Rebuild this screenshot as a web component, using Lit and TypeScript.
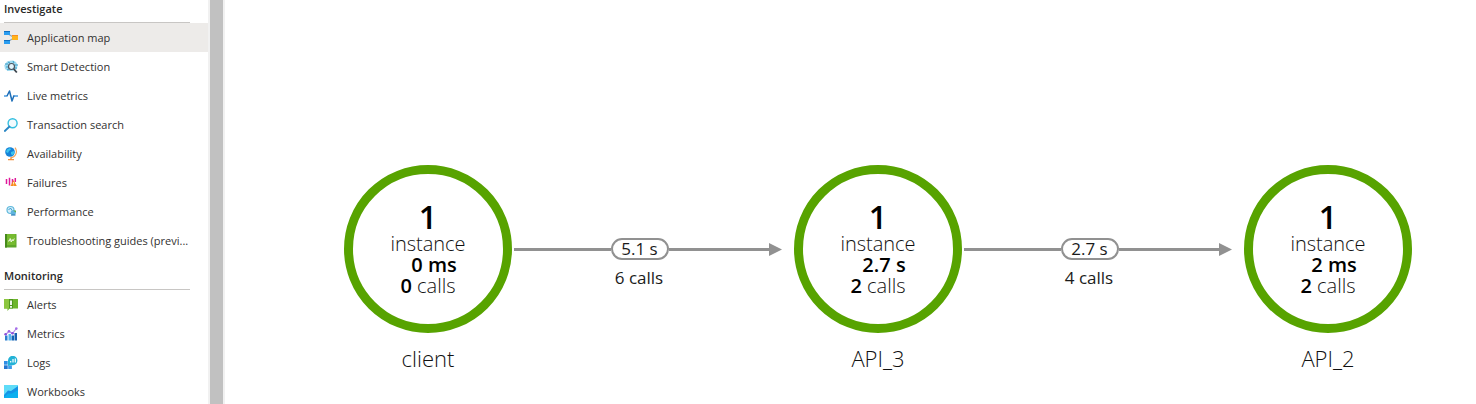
import { LitElement, html, css, svg, TemplateResult } from "lit";
import { customElement, property } from "lit/decorators.js";

interface MenuItem {
  label: string;
  icon: TemplateResult;
}

interface MenuSection {
  title: string;
  items: MenuItem[];
}

const icons = {
  map: svg`
    <path d="M5 3.500 9 6M5 10 9 7.500" stroke="#8fa9b8" stroke-width="1.200" fill="none"/>
    <rect x="0" y="0" width="6" height="4" fill="#2a9df0"/>
    <rect x="0" y="0" width="6" height="1" fill="#0f6fc0"/>
    <rect x="0" y="9" width="6" height="4" fill="#2a9df0"/>
    <rect x="0" y="9" width="6" height="1" fill="#0f6fc0"/>
    <rect x="8" y="4" width="6" height="5" fill="#ffb31a"/>
    <rect x="8" y="4" width="6" height="1" fill="#f78d1e"/>`,
  detection: svg`
    <path d="M3 1.500 6 .8 9 .5 12 2l1.500 3-.5 4-3 1.500-6 .5L1 9 .3 5.500z" fill="#9fdaf0"/>
    <path d="M1 4h3M2 7h2M4 2l2 1M9 1l1 2M11 5h3M11 8h2M3 10l2-1" stroke="#3c9fc9" stroke-width="1"/>
    <circle cx="7.500" cy="6.500" r="3" fill="#e4f5fc" stroke="#4a5560" stroke-width="1.200"/>
    <path d="M9.800 9 12.800 12.500" stroke="#3b444d" stroke-width="1.800"/>`,
  pulse: svg`
    <path d="M0 7h3.500M9.500 7H14" fill="none" stroke="#4a9be0" stroke-width="1.500"/>
    <path d="M3 7 5.500 2 8 12 10 6.500" fill="none" stroke="#1f6fb8" stroke-width="1.500" stroke-linejoin="round"/>`,
  search: svg`
    <circle cx="8.600" cy="5.200" r="4.500" fill="#f2fbfe" stroke="#34bfe0" stroke-width="1.400"/>
    <path d="M5.500 8.500.8 13" stroke="#2a86c4" stroke-width="1.800" stroke-linecap="round"/>`,
  globe: svg`
    <path d="M11 .6a6.300 6.300 0 0 1-4.500 10.200" fill="none" stroke="#f5a55a" stroke-width="1.200"/>
    <path d="M7 10.500v2M4 12.600h6" stroke="#f5913a" stroke-width="1.300"/>
    <circle cx="6" cy="5" r="4.800" fill="#1482d8"/>
    <path d="M3 2.500 6 1l1 1.500-2 1.500L4 6 2 5zM7 5l3-1 .5 2L8.500 8.500 7 7z" fill="#3cc3ec"/>`,
  failures: svg`
    <path d="M2.500 3v5M5.500 1.800V9.500M8.500 3v5M11.300 2v4" stroke="#e0189a" stroke-width="1.500"/>
    <path d="M9.500 4 12.800 10H6.500z" fill="#f78d1e"/>
    <path d="M9.600 6v2M9.600 8.600v.8" stroke="#fff" stroke-width=".8"/>`,
  performance: svg`
    <circle cx="6.500" cy="5" r="3.500" fill="#d4eefa" stroke="#62b9dc" stroke-width="1.200"/>
    <path d="M4.500 5 6.500 3 8 5.500" stroke="#3a9fd0" fill="none"/>
    <circle cx="9.300" cy="7.500" r="2.600" fill="#5fb4de"/>
    <path d="M9 5.500h3v2z" fill="#61b146"/>
    <path d="M7 10h4.500" stroke="#3080b8" stroke-width="1.200"/>`,
  guide: svg`
    <rect x="1" y="0" width="11.500" height="13.500" rx=".6" fill="#5ea62a"/>
    <rect x="1" y="0" width="2" height="13.500" fill="#478a1d"/>
    <rect x="3" y="0" width="8.500" height="11" fill="#76bb2f"/>
    <path d="M4 7h1.200L6.200 4.500 7.200 8 8.200 5.500 9 7 10.300 4.500" fill="none" stroke="#f3fbe9" stroke-width=".9"/>`,
  alerts: svg`
    <path d="M0 1h14v9.500H5.500L3.500 13v-2.500H0z" fill="#6db52c"/>
    <path d="M0 1h5v9.500H0z" fill="#8cc63f"/>
    <rect x="5" y="1" width="4" height="9.500" fill="#4f971f"/>
    <path d="M7 2.500v4.500M7 8v1.700" stroke="#fff" stroke-width="1.800"/>`,
  metrics: svg`
    <rect x="1" y="8.500" width="2.500" height="5" fill="#2b7fd0"/>
    <rect x="4.500" y="7" width="2.500" height="6.500" fill="#55b5f0"/>
    <rect x="7.500" y="8.500" width="2.500" height="5" fill="#1467b8"/>
    <rect x="10.500" y="6" width="2.500" height="7.500" fill="#1c62b0"/>
    <path d="M1.500 7.500 5 4.500 8.500 6.500 12.300 1.500" fill="none" stroke="#b28be8" stroke-width="1.100"/>
    <circle cx="1.600" cy="7.300" r="1.300" fill="#8b50d8"/>
    <circle cx="5" cy="4.300" r="1.300" fill="#9a62e0"/>
    <circle cx="8.500" cy="6.300" r="1.300" fill="#8b50d8"/>
    <circle cx="12.300" cy="1.600" r="1.300" fill="#a66ee8"/>`,
  logs: svg`
    <rect x="0" y="5" width="3.700" height="3.700" fill="#2f8fe4"/>
    <rect x="0" y="9.300" width="3.700" height="3.700" fill="#2275cf"/>
    <rect x="4.200" y="9.300" width="3.700" height="3.700" fill="#3d9bea"/>
    <path d="M4 10V4.500a4.700 4.700 0 1 1 5 4.700H6z" fill="#23b2d6"/>
    <path d="M6.700 6.500V5M9 6.500V3M11.300 6.500V2.500" stroke="#fff" stroke-width="1.200"/>`,
  workbooks: svg`
    <rect x="0" y="0" width="14" height="13" fill="#5fdcf8"/>
    <path d="M0 10 4 5.500 7 6 14 1v12H0z" fill="#1493e6"/>
    <path d="M0 12 4 8.500 8 8.500 14 5v8H0z" fill="#0bafef"/>`,
};

const sections: MenuSection[] = [
  {
    title: "Investigate",
    items: [
      { label: "Application map", icon: icons.map },
      { label: "Smart Detection", icon: icons.detection },
      { label: "Live metrics", icon: icons.pulse },
      { label: "Transaction search", icon: icons.search },
      { label: "Availability", icon: icons.globe },
      { label: "Failures", icon: icons.failures },
      { label: "Performance", icon: icons.performance },
      { label: "Troubleshooting guides (previ...", icon: icons.guide },
    ],
  },
  {
    title: "Monitoring",
    items: [
      { label: "Alerts", icon: icons.alerts },
      { label: "Metrics", icon: icons.metrics },
      { label: "Logs", icon: icons.logs },
      { label: "Workbooks", icon: icons.workbooks },
    ],
  },
];

@customElement("side-menu")
export class SideMenu extends LitElement {
  static styles = css`
    :host {
      display: flex;
      overflow: hidden;
      font-size: 11px;
      line-height: 16px;
      color: #323130;
    }
    .menu {
      width: 208px;
    }
    .title {
      margin: 0 18px 0 4px;
      padding: 12px 0 4px;
      border-bottom: 1px solid #c8c6c4;
      font-size: 11px;
      line-height: 18px;
      font-weight: 600;
      color: #292827;
    }
    .section:first-child .title {
      padding-top: 0;
    }
    .list {
      margin: 0;
      padding: 0;
      list-style: none;
    }
    .item {
      display: flex;
      align-items: center;
      gap: 9px;
      height: 29px;
      padding: 0 4px;
      color: inherit;
      text-decoration: none;
      white-space: nowrap;
    }
    .item.selected {
      background: #edebe9;
    }
    .icon {
      flex: none;
      width: 14px;
      height: 14px;
    }
    .scrollbar {
      width: 13px;
      border: solid #f1f1f1;
      border-width: 0 2px;
      background: #c1c1c1;
    }
  `;

  render() {
    return html`
      <nav class="menu">
        ${sections.map(
          (section, s) => html`
            <section class="section">
              <h2 class="title">${section.title}</h2>
              <ul class="list">
                ${section.items.map(
                  (item, i) => html`
                    <li>
                      <a class="item ${s === 0 && i === 0 ? "selected" : ""}" href="#">
                        <svg class="icon" viewBox="0 0 14 14" aria-hidden="true">${item.icon}</svg>
                        <span>${item.label}</span>
                      </a>
                    </li>
                  `
                )}
              </ul>
            </section>
          `
        )}
      </nav>
      <div class="scrollbar"></div>
    `;
  }
}

@customElement("map-node")
export class MapNode extends LitElement {
  @property() name = "";
  @property() duration = "";
  @property() calls = "";

  static styles = css`
    :host {
      display: flex;
      flex-direction: column;
      align-items: center;
      gap: 10px;
      width: 168px;
      color: #111;
    }
    .ring {
      box-sizing: border-box;
      display: flex;
      flex-direction: column;
      align-items: center;
      width: 168px;
      height: 168px;
      padding-top: 27px;
      border: 9px solid #57a300;
      border-radius: 50%;
      font-size: 20px;
      line-height: 21px;
      font-weight: 300;
      white-space: pre;
    }
    .count {
      font-size: 32px;
      line-height: 32px;
    }
    .strong {
      font-weight: 600;
      color: #000;
    }
    .duration {
      padding-left: 12px;
    }
    .name {
      font-size: 22px;
      line-height: 30px;
      font-weight: 300;
    }
  `;

  render() {
    return html`
      <div class="ring">
        <span class="count strong">1</span>
        <span>instance</span>
        <span class="duration strong">${this.duration}</span>
        <span><span class="strong">${this.calls}</span> calls</span>
      </div>
      <span class="name">${this.name}</span>
    `;
  }
}

@customElement("map-link")
export class MapLink extends LitElement {
  @property() duration = "";
  @property() calls = "";

  static styles = css`
    :host {
      display: flex;
      flex-direction: column;
      align-items: center;
      gap: 6px;
      padding: 73px 12px 0 2px;
      font-size: 17px;
      line-height: 24px;
      color: #1b1b1b;
    }
    .arrow {
      display: flex;
      align-items: center;
      align-self: stretch;
    }
    .line {
      height: 3px;
      background: #919191;
    }
    .line.start {
      flex: 97 0 0;
    }
    .line.end {
      flex: 101 0 0;
    }
    .head {
      flex: none;
      width: 13px;
      height: 13px;
      fill: #919191;
    }
    .pill {
      box-sizing: border-box;
      width: 58px;
      border: 2px solid #919191;
      border-radius: 12px;
      line-height: 18px;
      text-align: center;
    }
    .calls {
      margin-right: 18px;
    }
  `;

  render() {
    return html`
      <div class="arrow">
        <span class="line start"></span>
        <span class="pill">${this.duration}</span>
        <span class="line end"></span>
        <svg class="head" viewBox="0 0 13 13" aria-hidden="true"><path d="M0 0 13 6.500 0 13z" /></svg>
      </div>
      <span class="calls">${this.calls}</span>
    `;
  }
}

@customElement("app-root")
export class AppRoot extends LitElement {
  static styles = css`
    :host {
      display: flex;
      height: 100vh;
      overflow: hidden;
      background: #fff;
      font-family: "Segoe UI", "Open Sans", "Noto Sans", sans-serif;
    }
    .map {
      flex: 1;
      display: grid;
      grid-template-columns: auto 1fr auto 1fr auto;
      align-items: start;
      padding: 165px 64px 0 119px;
    }
  `;

  render() {
    return html`
      <side-menu></side-menu>
      <main class="map">
        <map-node name="client" duration="0 ms" calls="0"></map-node>
        <map-link duration="5.1 s" calls="6 calls"></map-link>
        <map-node name="API_3" duration="2.7 s" calls="2"></map-node>
        <map-link duration="2.7 s" calls="4 calls"></map-link>
        <map-node name="API_2" duration="2 ms" calls="2"></map-node>
      </main>
    `;
  }
}
